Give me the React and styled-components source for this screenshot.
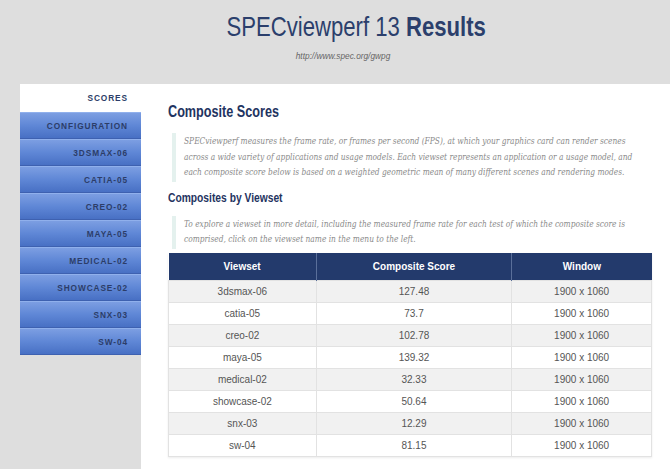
import React from "react"
import styled, { createGlobalStyle } from "styled-components"

const GlobalStyle = createGlobalStyle`
  html, body {
    margin: 0;
    padding: 0;
    background: #dedede;
  }
  body {
    font-family: "Liberation Sans", Arial, sans-serif;
  }
`

const Page = styled.div`
  width: 670px;
  height: 469px;
  overflow: hidden;
`

// no Arial Narrow installed, so squeeze Liberation Sans instead
const Narrow = styled.span`
  display: inline-block;
  white-space: nowrap;
  transform: scaleX(${(p) => p.$scale || 0.79});
  transform-origin: ${(p) => p.$origin || "left"} center;
`

const Header = styled.header`
  height: 84px;
  display: flex;
  flex-direction: column;
  align-items: center;
  padding-top: 10px;
  box-sizing: border-box;
`

const Title = styled.h1`
  margin: 0 0 0 42px;
  font-weight: normal;
  font-size: 28px;
  line-height: 34px;
  color: #2b3f6c;

  b {
    font-weight: bold;
  }
`

const Url = styled.div`
  margin: 7px 0 0 16px;
  font-style: italic;
  font-size: 8.3px;
  color: #666;
`

const Main = styled.div`
  display: flex;
  margin-left: 20px;
  height: 385px;
`

const Sidebar = styled.nav`
  width: 121px;
  display: flex;
  flex-direction: column;
`

const Tab = styled.div`
  height: ${(p) => (p.$active ? "28px" : "27px")};
  box-sizing: border-box;
  display: flex;
  align-items: center;
  justify-content: flex-end;
  padding-right: 13px;
  font-weight: bold;
  font-size: 8.3px;
  letter-spacing: 0.9px;
  color: #2c3d68;
  background: ${(p) =>
    p.$active ? "#fff" : "linear-gradient(to bottom, #7c9ee2 0%, #5f87d6 50%, #4870c4 100%)"};
  border-top: ${(p) => (p.$active ? "none" : "1px solid #90b0ec")};
  border-bottom: ${(p) => (p.$active ? "none" : "1px solid #3e61b0")};
`

const Content = styled.main`
  flex: 1;
  background: #fff;
  padding: 18px 18px 0 27px;
  box-sizing: border-box;
`

const Heading = styled.h2`
  margin: ${(p) => p.$margin || 0};
  font-weight: bold;
  font-size: ${(p) => p.$size}px;
  color: #1f3461;
  line-height: 20px;
`

const Quote = styled.blockquote`
  margin: ${(p) => p.$margin};
  padding: 1px 0 1px 8px;
  border-left: 4px solid #e4f1ee;
  font-family: "DejaVu Serif Condensed", "DejaVu Serif", serif;
  font-style: italic;
  font-size: 8.3px;
  line-height: 15.5px;
  color: #8a8a8a;
  white-space: nowrap;
`

const Table = styled.table`
  width: 484px;
  border-collapse: collapse;
  font-size: 10px;
  box-shadow: 0 1px 2px rgba(0, 0, 0, 0.08);
`

const Th = styled.th`
  height: 27px;
  padding: 0;
  background: #233a6c;
  color: #fff;
  font-weight: bold;
  font-size: 10px;
  border-left: 1px solid #5a6f9a;
  &:first-child {
    border-left: none;
  }
`

const Row = styled.tr`
  background: ${(p) => (p.$odd ? "#f1f1f1" : "#fff")};
`

const Td = styled.td`
  height: 21px;
  text-align: center;
  color: #555;
  border: 1px solid #e2e2e2;
  padding: 0;
`

const tabs = [
  "CONFIGURATION",
  "3DSMAX-06",
  "CATIA-05",
  "CREO-02",
  "MAYA-05",
  "MEDICAL-02",
  "SHOWCASE-02",
  "SNX-03",
  "SW-04",
]

const rows = [
  ["3dsmax-06", "127.48"],
  ["catia-05", "73.7"],
  ["creo-02", "102.78"],
  ["maya-05", "139.32"],
  ["medical-02", "32.33"],
  ["showcase-02", "50.64"],
  ["snx-03", "12.29"],
  ["sw-04", "81.15"],
]

export default function App() {
  return (
    <Page>
      <GlobalStyle />
      <Header>
        <Title>
          <Narrow $origin="center">
            SPECviewperf 13 <b>Results</b>
          </Narrow>
        </Title>
        <Url>http://www.spec.org/gwpg</Url>
      </Header>
      <Main>
        <Sidebar>
          <Tab $active>SCORES</Tab>
          {tabs.map((t) => (
            <Tab key={t}>{t}</Tab>
          ))}
        </Sidebar>
        <Content>
          <Heading $size={16}>
            <Narrow>Composite Scores</Narrow>
          </Heading>
          <Quote $margin="11px 0 0 4px">
            SPECviewperf measures the frame rate, or frames per second (FPS), at which your graphics card can render scenes
            <br />
            across a wide variety of applications and usage models. Each viewset represents an application or a usage model, and
            <br />
            each composite score below is based on a weighted geometric mean of many different scenes and rendering modes.
          </Quote>
          <Heading $size={13} $margin="6px 0 0">
            <Narrow>Composites by Viewset</Narrow>
          </Heading>
          <Quote $margin="8px 0 4px 4px">
            To explore a viewset in more detail, including the measured frame rate for each test of which the composite score is
            <br />
            comprised, click on the viewset name in the menu to the left.
          </Quote>
          <Table>
            <colgroup>
              <col style={{ width: 148 }} />
              <col style={{ width: 196 }} />
              <col style={{ width: 140 }} />
            </colgroup>
            <thead>
              <tr>
                <Th>Viewset</Th>
                <Th>Composite Score</Th>
                <Th>Window</Th>
              </tr>
            </thead>
            <tbody>
              {rows.map(([name, score], i) => (
                <Row key={name} $odd={i % 2 === 0}>
                  <Td>{name}</Td>
                  <Td>{score}</Td>
                  <Td>1900 x 1060</Td>
                </Row>
              ))}
            </tbody>
          </Table>
        </Content>
      </Main>
    </Page>
  )
}
